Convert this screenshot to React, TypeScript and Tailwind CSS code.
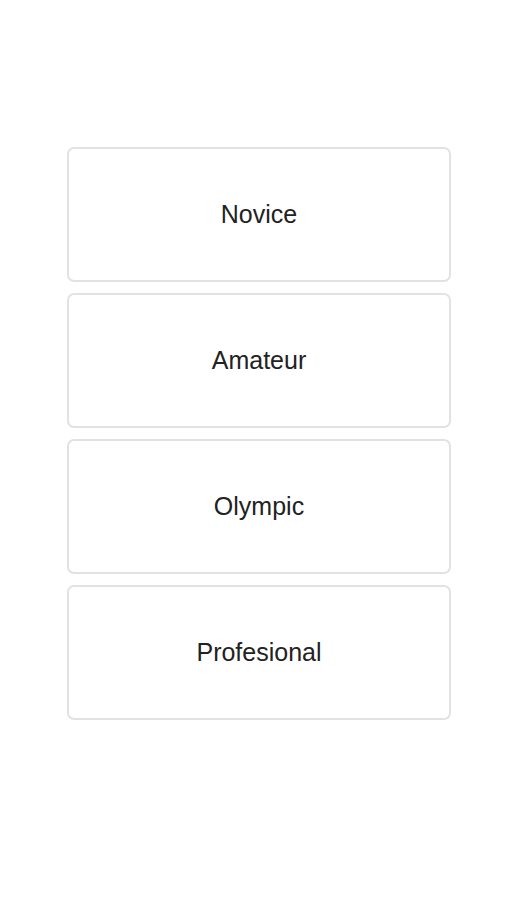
const levels = ['Novice', 'Amateur', 'Olympic', 'Profesional'];

export default function App() {
  return (
    <div className="min-h-[900px] w-full bg-white pt-[147px] font-['Liberation_Sans',Arial,sans-serif]">
      <div className="ml-[67px] flex w-[384px] flex-col gap-[11px]">
        {levels.map((level) => (
          <button
            key={level}
            className="flex h-[135px] items-center justify-center rounded-[7px] border-2 border-[#e2e2e2] bg-white text-[25px] text-[#222222]"
          >
            {level}
          </button>
        ))}
      </div>
    </div>
  );
}
